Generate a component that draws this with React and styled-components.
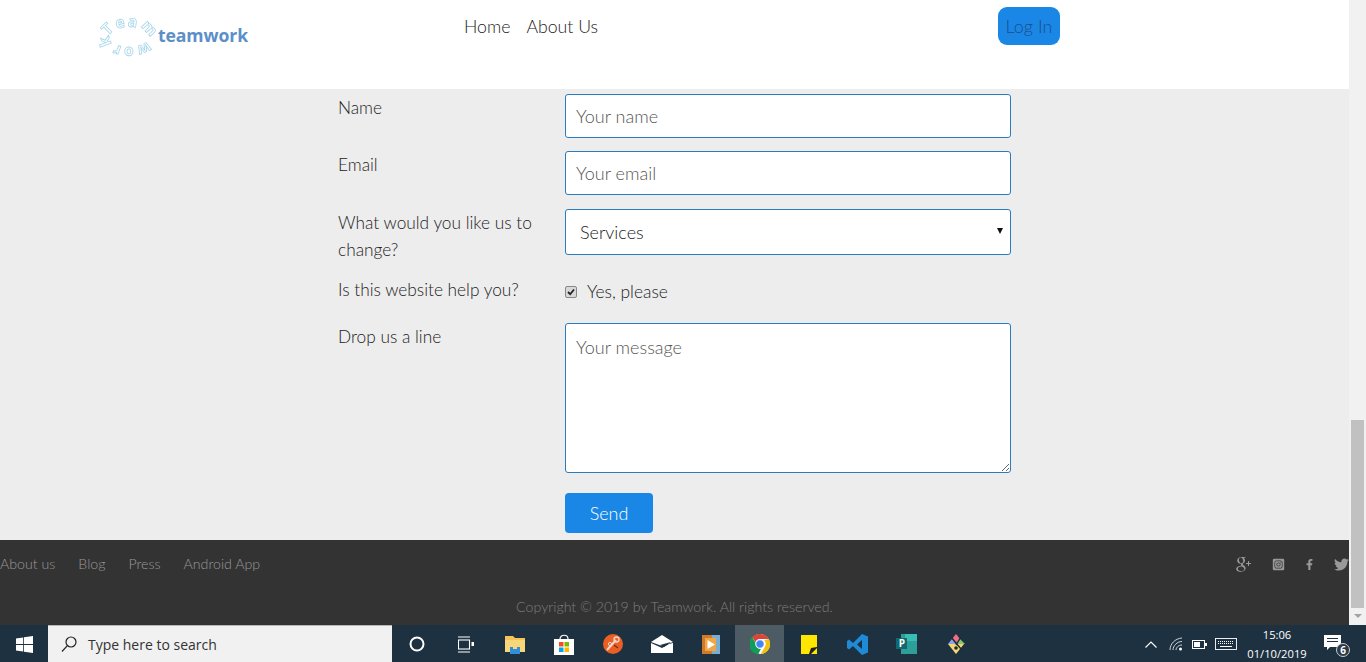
import React from 'react'
import styled, { createGlobalStyle } from 'styled-components'
import { FaInstagramSquare, FaFacebookF, FaTwitter } from 'react-icons/fa'
import { TiSocialGooglePlus } from 'react-icons/ti'

const Global = createGlobalStyle`
  html, body {
    margin: 0;
    padding: 0;
    height: 100%;
    overflow: hidden;
    background: #ededed;
    font-family: "Lato", "Open Sans", sans-serif;
    font-weight: 300;
  }
  * { box-sizing: border-box; }
`

const Screen = styled.div`
  width: 1366px;
  height: 662px;
  display: flex;
  flex-direction: column;
`

const Viewport = styled.div`
  flex: 0 0 625px;
  height: 625px;
  display: flex;
`

const Page = styled.div`
  flex: 1;
  display: flex;
  flex-direction: column;
  min-width: 0;
`

const Header = styled.header`
  flex: 0 0 89px;
  background: #fff;
  display: flex;
  align-items: flex-start;
  padding: 7px 0 0 100px;
`

const Logo = styled.div`
  width: 364px;
  height: 56px;
  display: flex;
  align-items: center;
  padding-top: 3px;
  svg { flex: none; overflow: visible; filter: blur(0.3px); }
`

const LogoWord = styled.span`
  font-family: "Open Sans", sans-serif;
  font-weight: 700;
  font-size: 17.6px;
  letter-spacing: -0.1px;
  color: #5c8fc8;
  margin-top: -4px;
`

const Nav = styled.nav`
  width: 534px;
  display: flex;
  gap: 16px;
  padding-top: 8px;
`

const NavLink = styled.a`
  font-size: 17.7px;
  line-height: 24px;
  color: #222;
`

const LoginButton = styled.button`
  width: 62px;
  height: 38px;
  border: 0;
  border-radius: 9px;
  background: #1a87e6;
  color: #1c4f8c;
  font: 300 18px "Lato", sans-serif;
  padding: 0;
`

const Main = styled.main`
  flex: 0 0 451px;
  padding: 5px 0 0 338px;
  display: flex;
  flex-direction: column;
`

const Row = styled.div`
  display: grid;
  grid-template-columns: 227px 446px;
  margin-bottom: ${({ $gap }) => $gap}px;
`

const Label = styled.label`
  font-size: 17.3px;
  line-height: 27px;
  color: #222;
`

const TextInput = styled.input`
  width: 446px;
  height: 44px;
  border: 1px solid #2a7cc0;
  border-radius: 3px;
  background: #fff;
  padding: 0 10px;
  font: 300 18px "Lato", sans-serif;
  outline: none;
  &::placeholder { color: #555; opacity: 1; }
`

const SelectBox = styled.div`
  width: 446px;
  height: 46px;
  border: 1px solid #2a7cc0;
  border-radius: 3px;
  background: #fff;
  display: flex;
  align-items: center;
  justify-content: space-between;
  padding: 0 7px 0 14px;
  font-size: 18px;
  color: #222;
`

const Caret = styled.span`
  width: 0;
  height: 0;
  border-left: 3px solid transparent;
  border-right: 3px solid transparent;
  border-top: 6px solid #111;
  margin-top: -2px;
`

const CheckRow = styled.div`
  display: flex;
  align-items: center;
  gap: 10px;
  padding-top: 2px;
  font-size: 17.4px;
  line-height: 27px;
  color: #222;
`

const CheckBox = styled.span`
  width: 12px;
  height: 12px;
  border: 1px solid #888;
  border-radius: 2px;
  background: #d8d8d8;
  display: flex;
  align-items: center;
  justify-content: center;
  svg { display: block; }
`

const MessageBox = styled.textarea`
  width: 446px;
  height: 150px;
  display: block;
  border: 1px solid #2a7cc0;
  border-radius: 3px;
  background: #fff;
  padding: 11px 10px;
  font: 300 18px/24px "Lato", sans-serif;
  outline: none;
  &::placeholder { color: #555; opacity: 1; }
`

const SendButton = styled.button`
  width: 88px;
  height: 40px;
  border: 0;
  border-radius: 4px;
  background: #1a87e6;
  color: #fff;
  font: 300 18px "Lato", sans-serif;
  padding: 0;
`

const Footer = styled.footer`
  flex: 0 0 85px;
  background: #333;
  overflow: hidden;
  display: flex;
  flex-direction: column;
`

const FooterTop = styled.div`
  display: flex;
  justify-content: space-between;
  align-items: center;
  height: 46px;
`

const FooterLinks = styled.div`
  display: flex;
  gap: 23px;
`

const FooterLink = styled.a`
  font-size: 14.2px;
  color: #999;
`

const Socials = styled.div`
  display: flex;
  align-items: center;
  gap: 21px;
  margin: 2px 1px 0 0;
  color: #999;
  svg { display: block; flex: none; }
`

const SocialSlot = styled.span`
  width: ${({ $w }) => $w}px;
  display: flex;
  justify-content: center;
`

const Copyright = styled.div`
  text-align: center;
  font-size: 14.2px;
  line-height: 18px;
  color: #7e7e7e;
  margin-top: 12px;
`

const Scrollbar = styled.div`
  flex: 0 0 17px;
  background: #f1f1f1;
  display: flex;
  flex-direction: column;
  padding-top: 420px;
  align-items: center;
`

const Thumb = styled.div`
  width: 100%;
  height: 188px;
  background: #c1c1c1;
  border-left: 2px solid #f1f1f1;
  border-right: 2px solid #f1f1f1;
`

const ArrowDown = styled.div`
  width: 0;
  height: 0;
  margin-top: 6px;
  border-left: 4px solid transparent;
  border-right: 4px solid transparent;
  border-top: 4px solid #a3a3a3;
`

const Taskbar = styled.div`
  flex: 0 0 37px;
  background: #1e3141;
  display: flex;
  align-items: stretch;
`

const StartTile = styled.div`
  width: 48px;
  display: flex;
  align-items: center;
  justify-content: center;
`

const SearchBox = styled.div`
  width: 344px;
  background: #f1f1f1;
  border-top: 1px solid #b8b8b8;
  display: flex;
  align-items: center;
  gap: 11px;
  padding-left: 13px;
  font: 400 14px "Open Sans", sans-serif;
  color: #333;
`

const Tiles = styled.div`
  display: flex;
`

const Tile = styled.div`
  width: 49px;
  display: flex;
  align-items: center;
  justify-content: center;
  background: ${({ $active }) => ($active ? '#4d5b65' : 'transparent')};
`

const Tray = styled.div`
  margin-left: auto;
  display: flex;
  align-items: center;
  padding-right: 19px;
  color: #fff;
`

const TrayIcon = styled.span`
  display: flex;
  margin-right: ${({ $mr }) => $mr}px;
`

const Clock = styled.div`
  width: 70px;
  margin-right: 11px;
  text-align: center;
  font: 400 11.2px/19px "Open Sans", sans-serif;
  color: #fff;
`

const Notify = styled.span`
  position: relative;
  display: flex;
  width: 24px;
  height: 24px;
  padding: 3px 0 0 1px;
`

const NotifyBadge = styled.span`
  position: absolute;
  right: -3px;
  bottom: -1px;
  width: 14px;
  height: 14px;
  border-radius: 50%;
  background: #2a3a46;
  border: 1px solid #ccc;
  font: 700 10px/12px "Open Sans", sans-serif;
  text-align: center;
  color: #fff;
`

const LogoRing = () => (
  <svg width="58" height="44" viewBox="0 0 58 44">
    <defs>
      <path id="ring" d="M9.500 22 A19.500 10 0 1 1 48.500 22 A19.500 10 0 1 1 9.500 22" />
    </defs>
    <text
      fontFamily="Open Sans, sans-serif"
      fontSize="15.5"
      fontWeight="700"
      letterSpacing="2"
      fill="#fff"
      stroke="#a6d6ea"
      strokeWidth="0.8"
    >
      <textPath href="#ring">Teamwork</textPath>
    </text>
  </svg>
)

const WinIcon = () => (
  <svg width="17" height="17" viewBox="0 0 17 17" fill="#fff">
    <path d="M0 2.4 7.2 1.4V8H0ZM8 1.3 17 0V8H8ZM0 9H7.2V15.6L0 14.6ZM8 9H17V17L8 15.7Z" />
  </svg>
)

const SearchIcon = () => (
  <svg width="16" height="17" viewBox="0 0 16 17" fill="none" stroke="#222" strokeWidth="1.2">
    <circle cx="10" cy="6" r="5" />
    <path d="M6.4 9.6 1 15.5" />
  </svg>
)

const TaskView = () => (
  <svg width="16" height="17" viewBox="0 0 16 17" fill="none" stroke="#fff" strokeWidth="1.1">
    <path d="M0 1H12M0 16H12" />
    <rect x="0.5" y="4" width="11" height="9" />
    <rect x="13.5" y="6" width="2.5" height="4" fill="#fff" stroke="none" />
  </svg>
)

const Folder = () => (
  <svg width="20" height="19" viewBox="0 0 20 19">
    <path d="M0 1H8L10 3H20V17H0Z" fill="#f5c35b" />
    <path d="M0 5H20V17H0Z" fill="#fad67a" />
    <path d="M5 12H15V19H5Z" fill="#2f8fd8" />
    <path d="M8 12H12V14H8Z" fill="#fad67a" />
  </svg>
)

const Store = () => (
  <svg width="20" height="21" viewBox="0 0 20 21">
    <path d="M6 5C6 0 14 0 14 5" fill="none" stroke="#fff" strokeWidth="1.2" />
    <path d="M0 5H20V21H0Z" fill="#fff" />
    <path d="M5 8H9.5V12.5H5Z" fill="#f25022" />
    <path d="M10.5 8H15V12.5H10.5Z" fill="#7fba00" />
    <path d="M5 13.5H9.5V18H5Z" fill="#00a4ef" />
    <path d="M10.5 13.5H15V18H10.5Z" fill="#ffb900" />
  </svg>
)

const OrangeApp = () => (
  <svg width="20" height="20" viewBox="0 0 20 20">
    <circle cx="10" cy="10" r="10" fill="#e95f24" />
    <path d="M4 16 13 6" stroke="#f4d8c8" strokeWidth="2" />
    <circle cx="13.5" cy="5.5" r="2.5" fill="none" stroke="#f4d8c8" strokeWidth="1.3" />
    <circle cx="7" cy="10" r="1.6" fill="none" stroke="#f4d8c8" strokeWidth="1" />
    <path d="M11 11 15 14" stroke="#7a2d12" strokeWidth="1.4" />
  </svg>
)

const Mail = () => (
  <svg width="22" height="18" viewBox="0 0 22 18">
    <path d="M0 7 11 0 22 7 11 11Z" fill="#fff" />
    <path d="M0 8 11 13 18 9 22 8V18H0Z" fill="#fff" />
    <path d="M9 10 20 7 13 12Z" fill="#1e3141" />
  </svg>
)

const Player = () => (
  <svg width="18" height="21" viewBox="0 0 18 21">
    <path d="M0 1H18V20H0Z" fill="#79aed0" />
    <path d="M0 1H10V20H0Z" fill="#cf7a2b" />
    <path d="M3 4H14V17H3Z" fill="#f1a545" />
    <path d="M5.5 6 13 10.5 5.5 15Z" fill="#fff" />
  </svg>
)

const Chrome = () => (
  <svg width="20" height="20" viewBox="0 0 48 48">
    <circle cx="24" cy="24" r="24" fill="#fff" />
    <path d="M24 0A24 24 0 0 1 45 12H24A12 12 0 0 0 13 19L5 7A24 24 0 0 1 24 0Z" fill="#db4437" />
    <path d="M45 12A24 24 0 0 1 26 48L36 30A12 12 0 0 0 34 15Z" fill="#f4c20d" />
    <path d="M5 7 13.500 21A12 12 0 0 0 26 36L20 48A24 24 0 0 1 5 7Z" fill="#0f9d58" />
    <circle cx="24" cy="24" r="10" fill="#4285f4" stroke="#fff" strokeWidth="2" />
  </svg>
)

const Sticky = () => (
  <svg width="16" height="19" viewBox="0 0 16 19">
    <path d="M0 0H16V19H0Z" fill="#ffe600" />
    <path d="M8 19 10 13 16 12V13L10 19Z" fill="#222" />
  </svg>
)

const VSCode = () => (
  <svg width="21" height="21" viewBox="0 0 21 21">
    <path d="M15 0 21 2.500V18.500L15 21 6 12 2 15.500 0 14V7L2 5.500 6 9ZM15 6 10 10.500 15 15Z" fill="#1f8ad6" />
  </svg>
)

const Project = () => (
  <svg width="21" height="20" viewBox="0 0 21 20">
    <path d="M5 0H21V20H5Z" fill="#2d9f98" />
    <path d="M9 0H21V7H9Z" fill="#37bdb4" />
    <path d="M0 4H11V15H0Z" fill="#0f6a70" />
    <text x="2.8" y="13" fontSize="10" fontWeight="700" fontFamily="Open Sans, sans-serif" fill="#fff">P</text>
  </svg>
)

const Kraken = () => (
  <svg width="22" height="22" viewBox="0 0 22 22">
    <path d="M11 11 3 11 7 6Z" fill="#8aa5ef" />
    <path d="M11 11 7 6 11 1 15 6Z" fill="#ef6d86" />
    <path d="M11 11 15 6 20 11Z" fill="#86c76a" />
    <path d="M3 11 7 16 11 21 15 16 19 11 11 11Z" fill="#f5d774" />
    <path d="M6 4 16 16M16 4 11 12" stroke="#1c2b36" strokeWidth="1.4" fill="none" />
    <circle cx="11" cy="15" r="1.8" fill="#1c2b36" />
  </svg>
)

const Chevron = () => (
  <svg width="12" height="7" viewBox="0 0 12 7" fill="none" stroke="#fff" strokeWidth="1.1">
    <path d="M0.500 6.500 6 1 11.500 6.500" />
  </svg>
)

const Wifi = () => (
  <svg width="14" height="14" viewBox="0 0 14 14" fill="none" stroke="#cfd5da" strokeWidth="1">
    <path d="M1 13C1 7 6 1.500 13 1M4 13C4 9 8 4.500 13 4.500M7 13C7 10.500 9.500 8 13 8" />
    <circle cx="11.500" cy="12" r="1.500" fill="#fff" stroke="none" />
  </svg>
)

const Battery = () => (
  <svg width="15" height="9" viewBox="0 0 15 9">
    <rect x="0.500" y="0.500" width="12" height="8" fill="none" stroke="#fff" />
    <rect x="2" y="2" width="6" height="5" fill="#fff" />
    <rect x="13" y="3" width="2" height="3" fill="#fff" />
  </svg>
)

const Keyboard = () => (
  <svg width="22" height="12" viewBox="0 0 22 12" fill="none" stroke="#fff">
    <rect x="0.500" y="0.500" width="21" height="11" strokeWidth="0.9" />
    <path d="M3 3.500H19M3 5.500H19" strokeWidth="1" strokeDasharray="1 1" />
    <path d="M5 8.500H17" strokeWidth="1" />
  </svg>
)

const NotifyIcon = () => (
  <svg width="17" height="15" viewBox="0 0 17 15" fill="#fff">
    <path d="M0 0H17V12H6L3 15V12H0Z" />
    <path d="M3 3.500H14M3 6.500H14" stroke="#1e3141" strokeWidth="1" />
  </svg>
)

const App = () => {
  return (
    <>
      <Global />
      <Screen>
        <Viewport>
          <Page>
            <Header>
              <Logo>
                <LogoRing />
                <LogoWord>teamwork</LogoWord>
              </Logo>
              <Nav>
                <NavLink>Home</NavLink>
                <NavLink>About Us</NavLink>
              </Nav>
              <LoginButton>Log In</LoginButton>
            </Header>
            <Main>
              <Row $gap={13}>
                <Label>Name</Label>
                <TextInput placeholder="Your name" />
              </Row>
              <Row $gap={14}>
                <Label>Email</Label>
                <TextInput placeholder="Your email" />
              </Row>
              <Row $gap={13}>
                <Label>What would you like us to change?</Label>
                <SelectBox>
                  Services
                  <Caret />
                </SelectBox>
              </Row>
              <Row $gap={18}>
                <Label>Is this website help you?</Label>
                <CheckRow>
                  <CheckBox>
                    <svg width="8" height="8" viewBox="0 0 8 8" fill="none" stroke="#222" strokeWidth="1.8">
                      <path d="M1 4 3.200 6.200 7 1.500" />
                    </svg>
                  </CheckBox>
                  Yes, please
                </CheckRow>
              </Row>
              <Row $gap={20}>
                <Label>Drop us a line</Label>
                <MessageBox placeholder="Your message" />
              </Row>
              <Row $gap={0}>
                <span />
                <SendButton>Send</SendButton>
              </Row>
            </Main>
            <Footer>
              <FooterTop>
                <FooterLinks>
                  <FooterLink>About us</FooterLink>
                  <FooterLink>Blog</FooterLink>
                  <FooterLink>Press</FooterLink>
                  <FooterLink>Android App</FooterLink>
                </FooterLinks>
                <Socials>
                  <SocialSlot $w={16}><TiSocialGooglePlus size={24} /></SocialSlot>
                  <SocialSlot $w={12}><FaInstagramSquare size={13} /></SocialSlot>
                  <SocialSlot $w={8}><FaFacebookF size={11} /></SocialSlot>
                  <SocialSlot $w={14}><FaTwitter size={15} /></SocialSlot>
                </Socials>
              </FooterTop>
              <Copyright>Copyright © 2019 by Teamwork. All rights reserved.</Copyright>
            </Footer>
          </Page>
          <Scrollbar>
            <Thumb />
            <ArrowDown />
          </Scrollbar>
        </Viewport>
        <Taskbar>
          <StartTile><WinIcon /></StartTile>
          <SearchBox>
            <SearchIcon />
            Type here to search
          </SearchBox>
          <Tiles>
            <Tile>
              <svg width="16" height="16" viewBox="0 0 16 16" fill="none" stroke="#fff" strokeWidth="2">
                <circle cx="8" cy="8" r="6.500" />
              </svg>
            </Tile>
            <Tile><TaskView /></Tile>
            <Tile><Folder /></Tile>
            <Tile><Store /></Tile>
            <Tile><OrangeApp /></Tile>
            <Tile><Mail /></Tile>
            <Tile><Player /></Tile>
            <Tile $active><Chrome /></Tile>
            <Tile><Sticky /></Tile>
            <Tile><VSCode /></Tile>
            <Tile><Project /></Tile>
            <Tile><Kraken /></Tile>
          </Tiles>
          <Tray>
            <TrayIcon $mr={12}><Chevron /></TrayIcon>
            <TrayIcon $mr={9}><Wifi /></TrayIcon>
            <TrayIcon $mr={8}><Battery /></TrayIcon>
            <TrayIcon $mr={5}><Keyboard /></TrayIcon>
            <Clock>
              <div>15:06</div>
              <div>01/10/2019</div>
            </Clock>
            <Notify>
              <NotifyIcon />
              <NotifyBadge>6</NotifyBadge>
            </Notify>
          </Tray>
        </Taskbar>
      </Screen>
    </>
  )
}

export default App
